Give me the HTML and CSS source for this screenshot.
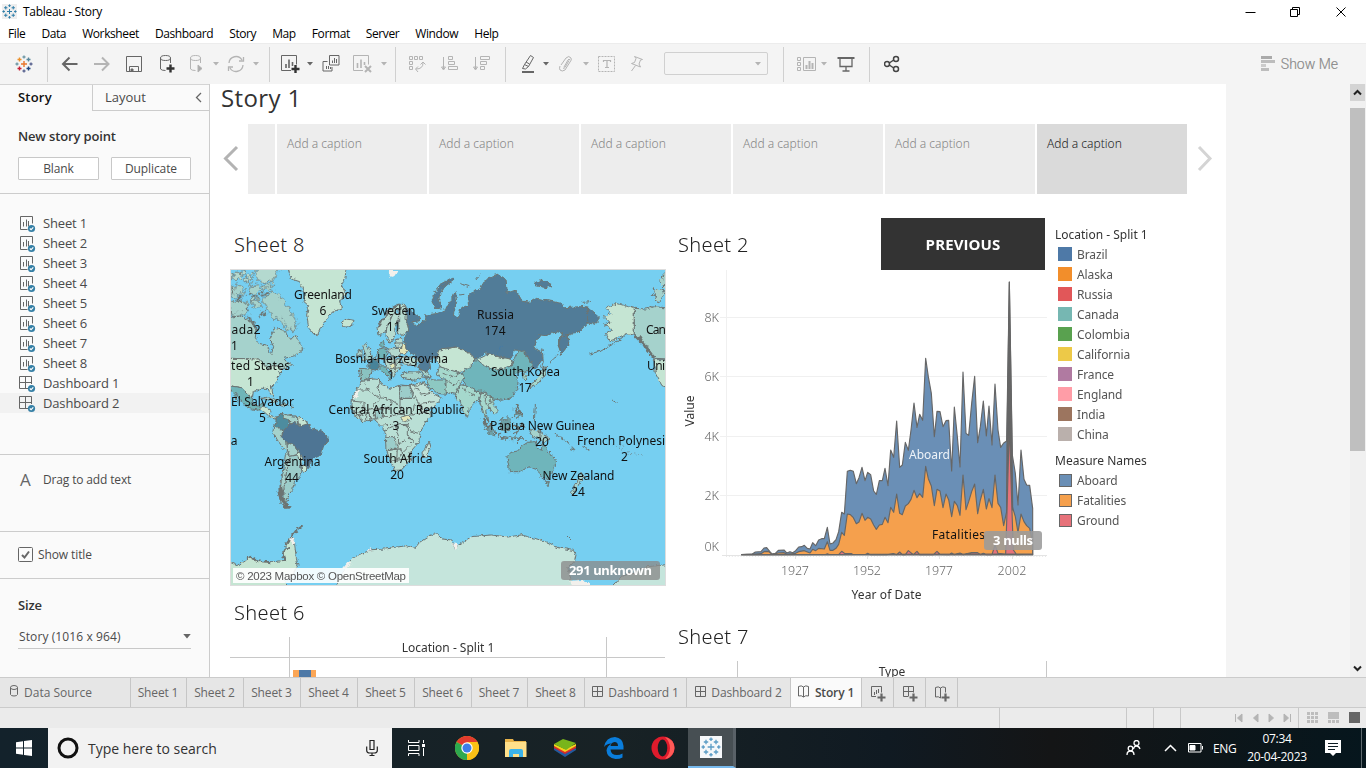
FILE: index.html
```html
<!DOCTYPE html>
<html lang="en">
<head>
<meta charset="utf-8">
<title>Tableau - Story</title>
<link rel="stylesheet" href="styles.css">
</head>
<body>
<svg class="defs" aria-hidden="true">
  <symbol id="logo" viewBox="0 0 18 18"><path d="M9 6v6M6 9h6"/><path d="M9 0.500v3M7.500 2h3M9 14.500v3M7.500 16h3M2 7.500v3M.5 9h3M16 7.500v3M14.500 9h3M4.500 2.500v4M2.500 4.500h4M13.500 2.500v4M11.500 4.500h4M4.500 11.500v4M2.500 13.500h4M13.500 11.500v4M11.500 13.500h4"/></symbol>
  <symbol id="caret" viewBox="0 0 6 4"><path d="M0 0h6L3 3.500z"/></symbol>
  <symbol id="sheet" viewBox="0 0 17 17"><path d="M8.500 13.500H1.500V.5h12v7" /><path d="M4.500 6v4.500M7.500 3.500v7M9.500 5v5.500"/><circle class="badge" cx="12.500" cy="12.500" r="3.600"/><path class="tick" d="M10.800 12.500l1.300 1.200 2.200-2.400"/></symbol>
  <symbol id="dash" viewBox="0 0 17 17"><path d="M9 12.500H.5V.5h12v7.500M6.500 .5v12M.5 6.500h12"/><circle class="badge" cx="12.500" cy="12.500" r="3.600"/><path class="tick" d="M10.800 12.500l1.300 1.200 2.200-2.400"/></symbol>
  <symbol id="grid" viewBox="0 0 12 12"><path d="M.5 .5h10v10h-10zM5.500 .5v10M.5 5.500h10"/></symbol>
  <symbol id="book" viewBox="0 0 12 13"><path d="M.5 1.500q3-1.500 5 .5v10q-2-2-5-1zM5.500 2q2-2 5-.5v9.500q-3-1-5 1"/></symbol>
</svg>

<header class="titlebar">
  <svg class="app-icon" width="15" height="15"><use href="#logo"/></svg>
  <span class="app-name">Tableau - Story</span>
  <svg class="win-controls" width="112" height="20"><path d="M5.500 10.500h10M50.500 7.500h7v7h-7zM52.500 7v-1.500h7v7H58M96.500 5.500l9 9M105.500 5.500l-9 9"/></svg>
</header>
<nav class="menubar"><span>File</span><span>Data</span><span>Worksheet</span><span>Dashboard</span><span>Story</span><span>Map</span><span>Format</span><span>Server</span><span>Window</span><span>Help</span></nav>

<div class="toolbar">
  <div class="seg seg-logo"><svg class="multi" width="18" height="18" viewBox="0 0 18 18"><path stroke="#e8762c" d="M9 6v6M6 9h6"/><path stroke="#c72037" d="M4.500 11.500v4M2.500 13.500h4"/><path stroke="#eb912c" d="M4.500 2.500v4M2.500 4.500h4"/><path stroke="#59879b" d="M13.500 2.500v4M11.500 4.500h4"/><path stroke="#1f447e" d="M13.500 11.500v4M11.500 13.500h4"/><path stroke="#7099a6" d="M9 .5v3M7.500 2h3M2 7.500v3M.5 9h3"/><path stroke="#5b6591" d="M16 7.500v3M14.500 9h3M9 14.500v3M7.500 16h3"/></svg></div>
  <div class="seg seg-file">
    <svg class="ic bold" width="18" height="16"><path d="M16.500 8H2M8.500 1.500L2 8l6.500 6.500"/></svg>
    <svg class="ic off bold" width="18" height="16"><path d="M1 8h14.500M9 1.500L15.500 8 9 14.500"/></svg>
    <svg class="ic" width="16" height="16"><path d="M.5 .5h15v15H.5zM3.500 15.500v-5h9v5"/><path d="M5 13h2v2.500H5z" fill="#666"/></svg>
    <svg class="ic" width="18" height="18"><path d="M3.500 3v11q1 1.500 5 1.500M13.500 3v5"/><ellipse cx="8.500" cy="3" rx="5" ry="2.500"/><path class="plus" d="M13.500 9.500v8M9.500 13.500h8"/></svg>
    <svg class="ic off" width="16" height="18"><path d="M2.500 3v11q1 1.500 5 1.500M12.500 3v5"/><ellipse cx="7.500" cy="3" rx="5" ry="2.500"/><path d="M10 10v7l4-3.500z" fill="#aaa"/></svg>
    <svg class="caret off" width="6" height="4"><use href="#caret"/></svg>
    <svg class="ic off" width="18" height="18"><path d="M2 8a7 7 0 0 1 13-3M16 10a7 7 0 0 1-13 3M16.500 2v4h-4.500M1.500 16v-4H6" stroke-width="1.300"/></svg>
    <svg class="caret off" width="6" height="4"><use href="#caret"/></svg>
  </div>
  <div class="seg seg-sheet">
    <svg class="ic" width="20" height="18"><path d="M11 15.500H1.500V.5h15v9"/><path d="M6 9v4M9 4.500v8.500M12.500 7v4" stroke-width="1.600"/><path class="plus" d="M15.500 10v8M11.500 14h8"/></svg>
    <svg class="caret" width="6" height="4"><use href="#caret"/></svg>
    <svg class="ic" width="18" height="18"><path d="M7.500 .5h9.500v9.500H7.500zM5.500 6.500h-4.500v9.500h9v-4"/><path d="M10.500 5.500v2.500M12.500 3v5M14.500 4v4M4.500 11v3M6.500 11v3M8.500 12v2"/></svg>
    <svg class="ic off" width="20" height="18"><path d="M11 15.500H1.500V.5h15v9"/><path d="M5.500 8v5M9 4.500v8.500M12.500 7v3" stroke-width="1.600"/><path d="M13 11l6 6M19 11l-6 6" stroke-width="2"/></svg>
    <svg class="caret off" width="6" height="4"><use href="#caret"/></svg>
  </div>
  <div class="seg seg-sort">
    <svg class="ic off" width="18" height="18"><path d="M1.500 1.500h3v3h-3zM6.500 1.500h3v3h-3zM11.500 1.500h3v3h-3zM1.500 6.500h3v3h-3zM1.500 11.500h3v3h-3zM15 8q0 6-7 6M12.500 9.500L15 7l2.500 2.500M10 11.500L7.500 14l2.500 3"/></svg>
    <svg class="ic off" width="19" height="18"><path d="M3.500 2v12M1.500 12h4l-2 3zM8.500 1.500h4v3h-4zM8.500 6.500h6v3h-6zM8.500 11.500h9v3h-9z"/></svg>
    <svg class="ic off" width="19" height="18"><path d="M3.500 2v12M1.500 12h4l-2 3zM8.500 1.500h9v3h-9zM8.500 6.500h6v3h-6zM8.500 11.500h4v3h-4z"/></svg>
  </div>
  <div class="seg seg-format">
    <svg class="ic" width="14" height="20"><path d="M9.500 1.500l3 2-5 9-4-2zM3.500 10.500l-2 4 3 .5 3-2.500M5 8l3.500 2"/><path d="M1 18h12" stroke-width="2"/></svg>
    <svg class="caret" width="6" height="4"><use href="#caret"/></svg>
    <svg class="ic off" width="16" height="18"><path d="M3 10l5-7q3-3 5 0 1 2-1 4l-5 8q-3 2-5 0-1-1.500 0-4M6 12l4-7q1-2 2 0M5 13q1 1 2-.5l4-7"/></svg>
    <svg class="caret off" width="6" height="4"><use href="#caret"/></svg>
    <svg class="ic off" width="18" height="16"><path d="M.5 .5h16v15H.5z" stroke-dasharray="2 1"/><path d="M5.500 6V4.500h7V6M9 4.500v7M7 11.500h4" stroke-width="1.200"/></svg>
    <svg class="ic off" width="16" height="18"><path d="M5.500 1.500l8 3-2 .5-1.500 4 1.500 3-9-3.500 3-1 1.500-4zM6.500 10.500l-4 5.500"/></svg>
    <span class="combo"><svg class="caret off" width="6" height="4"><use href="#caret"/></svg></span>
  </div>
  <div class="seg seg-view">
    <svg class="ic off" width="21" height="16"><path d="M1.500 1.500h3v3h-3zM1.500 6.500h3v3h-3zM1.500 11.500h3v3h-3zM7.500 1.500h12v13h-12z"/><path d="M10.500 9v4M13.500 5v8M16.500 7v6" stroke-width="2"/></svg>
    <svg class="caret off" width="6" height="4"><use href="#caret"/></svg>
    <svg class="ic" width="18" height="18"><path d="M.5 3h17" stroke-width="2"/><path d="M3 3v8.500h12V3M9 11.500v4M5.500 16h7" stroke-width="1.300"/></svg>
  </div>
  <div class="seg seg-share"><svg class="ic dark" width="16" height="18"><circle cx="3" cy="9" r="2.500"/><circle cx="12" cy="4" r="2.500"/><circle cx="12" cy="14" r="2.500"/><path d="M5.300 8L9.700 5M5.300 10L9.700 13"/></svg></div>
  <div class="showme"><svg width="15" height="16"><path d="M0 0h11v3H0z" fill="#aaa"/><path d="M0 4h14v3H0zM0 12h8v3H0z" fill="#bdbdbd"/><path d="M0 8h5v3H0z" fill="#ccc"/></svg><span>Show Me</span></div>
</div>

<main class="workspace">
  <aside class="side">
    <div class="side-tabs"><b>Story</b><div class="layout-tab"><span>Layout</span><svg width="7" height="11"><path d="M6 1L1.500 5.500 6 10"/></svg></div></div>
    <section class="new-point"><h3>New story point</h3><div class="btns"><button>Blank</button><button>Duplicate</button></div></section>
    <ul class="sheets">
      <li><svg width="17" height="17"><use href="#sheet"/></svg>Sheet 1</li>
      <li><svg width="17" height="17"><use href="#sheet"/></svg>Sheet 2</li>
      <li><svg width="17" height="17"><use href="#sheet"/></svg>Sheet 3</li>
      <li><svg width="17" height="17"><use href="#sheet"/></svg>Sheet 4</li>
      <li><svg width="17" height="17"><use href="#sheet"/></svg>Sheet 5</li>
      <li><svg width="17" height="17"><use href="#sheet"/></svg>Sheet 6</li>
      <li><svg width="17" height="17"><use href="#sheet"/></svg>Sheet 7</li>
      <li><svg width="17" height="17"><use href="#sheet"/></svg>Sheet 8</li>
      <li><svg width="17" height="17"><use href="#dash"/></svg>Dashboard 1</li>
      <li class="hover"><svg width="17" height="17"><use href="#dash"/></svg>Dashboard 2</li>
    </ul>
    <section class="add-text"><span class="big-a">A</span><span>Drag to add text</span></section>
    <section class="show-title"><svg width="15" height="15"><rect x=".5" y=".5" width="14" height="14" rx="1"/><path d="M4 8l2.500 2.500L11 4.500" stroke-width="2"/></svg><span>Show title</span></section>
    <section class="size"><h3>Size</h3><div class="select"><span>Story (1016 x 964)</span><svg class="caret" width="8" height="5"><use href="#caret"/></svg></div></section>
  </aside>

  <div class="story">
    <h1>Story 1</h1>
    <div class="captions">
      <svg class="nav" width="38" height="70"><path d="M27 23L15.500 34.500 27 46" stroke="#b3b3b3" stroke-width="3"/></svg>
      <div class="cap first"></div><div class="cap">Add a caption</div><div class="cap">Add a caption</div><div class="cap">Add a caption</div><div class="cap">Add a caption</div><div class="cap">Add a caption</div><div class="cap active">Add a caption</div>
      <svg class="nav" width="38" height="70"><path d="M12 23L23 34.500 12 46" stroke="#d4d4d4" stroke-width="3"/></svg>
    </div>
    <div class="board">
      <div class="col-left">
        <h2 class="t8">Sheet 8</h2>
        <svg class="map" width="436" height="317" viewBox="230 269 436 317">
          <rect x="230.500" y="269.500" width="435" height="316" fill="#76cff1" stroke="#ddd"/>
          <clipPath id="mc"><rect x="231" y="270" width="434" height="315"/></clipPath>
          <filter id="coast" x="-5%" y="-5%" width="110%" height="110%" color-interpolation-filters="sRGB"><feTurbulence type="fractalNoise" baseFrequency=".09" numOctaves="3" seed="4"/><feDisplacementMap in="SourceGraphic" scale="13" xChannelSelector="R" yChannelSelector="G"/></filter>
          <filter id="isles" x="-5%" y="-5%" width="110%" height="110%" color-interpolation-filters="sRGB"><feTurbulence type="fractalNoise" baseFrequency=".07" numOctaves="3" seed="9"/><feDisplacementMap in="SourceGraphic" scale="34" xChannelSelector="R" yChannelSelector="G"/></filter>
          <g clip-path="url(#mc)"><g class="land" transform="translate(228 265) scale(.33333)">
            <g filter="url(#isles)">
              <path fill="#a5d2cc" d="M110 92L130 80 155 90 165 110 190 130 190 150 206 172 200 196 178 190 160 165 135 155 108 118ZM4 110L40 100 60 115 55 145 35 150 4 148ZM68 100L90 98 96 118 85 135 70 125ZM2 65L30 60 50 72 45 92 20 98 2 90ZM60 62L90 58 100 75 85 88 62 84ZM105 60L140 62 130 72 108 72Z"/>
              <path fill="#b4d9cf" d="M20 20L45 18 40 40 22 45ZM52 30L72 22 75 45 55 50ZM85 5L158 5 140 35 128 52 98 52 84 35ZM0 20L16 25 14 42 0 44Z"/>
              <path class="heavy" d="M8 150L30 156 50 168M52 126L64 140M10 70L18 86M98 92L118 84M20 104L40 108M70 90L84 96M60 158L74 176 86 196M112 134L100 152"/>
              <g transform="translate(654 0)"><path fill="#6da0a6" d="M110 462L130 480 155 510 145 512 122 490ZM168 468L190 455 198 470 185 500 166 490ZM205 490L220 480 215 505ZM208 420L218 432 226 455 216 462 208 440ZM150 512L200 518 240 522 200 524Z"/><path class="heavy" d="M210 425L222 450M112 465L128 486M206 482L212 500M228 478L236 484"/><path fill="#a5d2cc" d="M620 80L640 72 655 85 640 110 625 100ZM640 40L664 30 664 72 645 55ZM608 134L624 128 640 132"/></g>
            </g>
            <g filter="url(#coast)">
            <path fill="#a5d2cc" d="M2 158L40 152 70 172 84 195 82 218 92 235 115 240 130 268 137 245 125 222 140 190 165 195 190 225 202 212 225 252 200 272 170 280 178 290 194 300 165 312 140 300 118 312 95 282 2 280Z"/>
            <g fill="#c5e5d3">
              <path d="M178 5L355 5 350 45 340 60 355 88 335 108 340 132 312 142 298 160 282 180 268 212 258 208 242 188 236 150 242 122 228 110 232 88 215 50 190 42Z"/>
              <path d="M340 172L355 162 378 166 374 180 356 187 342 182Z"/>
              <path d="M2 280L95 282 120 312 140 300 165 312 155 322 148 348 130 365 137 394 128 388 120 370 100 370 76 380 73 400 55 382 40 368 2 362Z"/>
            </g>
            <path fill="#6fb5b8" d="M2 362L40 368 55 382 72 398 76 420 94 424 100 412 108 415 102 428 94 436 60 430 38 408 22 382 28 410 15 385Z"/>
            <path fill="#c5e5d3" d="M92 432L108 424 126 436 124 450 140 456 152 455 148 464 128 458 110 442ZM158 414L178 418 172 426 158 422Z"/>
            <path fill="#a5d2cc" d="M98 400L118 396 150 410 138 412 120 404ZM188 424L196 424 194 428Z"/>
            <path fill="#4d8c9f" d="M145 460L162 444 168 460 184 465 180 485 174 500 160 492 142 482Z"/>
            <g fill="#a5d2cc"><path d="M162 446L180 450 210 455 208 475 190 485 184 465 168 460Z"/><path d="M137 482L150 488 166 498 160 518 176 532 180 560 165 548 148 525 135 500Z"/><path d="M178 532L200 542 214 560 205 570 185 574 178 555Z"/></g>
            <path fill="#c5e5d3" d="M208 455L240 472 236 484 212 480ZM205 568L214 560 226 578 220 590ZM222 600L240 612 230 622 220 615Z"/>
            <path fill="#4e7594" d="M172 490L185 478 200 472 215 484 240 476 248 490 280 498 300 514 300 530 285 548 280 570 258 580 248 592 240 612 224 602 234 594 224 580 214 560 202 542 178 532 160 518 166 500Z"/>
            <path fill="#9ccdca" d="M185 574L205 570 220 590 216 602 222 618 212 640 200 648 194 674 182 690 176 712 168 710 168 670 174 630Z"/>
            <path fill="#a5d2cc" d="M176 558L184 574 174 630 166 680 162 700 180 722 190 726 176 730 158 712 152 688 160 650 168 610 172 570Z"/>
            <path class="heavy" d="M155 670L158 700 172 722 186 728M158 660L164 690M152 680L162 706 180 726M160 690L172 712"/>

            <g fill="#b7dcd0"><path d="M447 188L470 158 482 135 510 118 532 118 534 126 514 130 496 145 484 170 474 190 470 205 450 210Z"/><path d="M496 145L512 148 510 170 500 192 502 212 486 235 474 215 476 190Z"/><path d="M514 130L530 126 540 160 546 195 520 212 508 205 512 188 512 150Z"/></g>
            <path class="mid" d="M448 188L470 156 484 134 512 118"/>
            <path fill="#a5d2cc" d="M400 282L412 266 404 245 414 235 422 248 432 268 430 282 412 287ZM388 258L402 255 402 272 386 276Z"/>
            <path fill="#6fb5b8" d="M452 252L474 248 480 266 470 285 450 280ZM452 304L470 302 478 318 494 336 486 346 478 330 460 318ZM458 236L466 226 470 244 460 248Z"/>
            <path fill="#478399" d="M422 290L440 282 454 288 453 308 442 316 424 312Z"/>
            <path fill="#8ac3c1" d="M395 310L424 312 432 320 420 342 400 346 392 338Z"/>
            <path fill="#b4d9cf" d="M480 252L514 250 516 272 492 276ZM470 286L492 278 516 282 520 304 508 318 500 334 488 320 474 304ZM516 276L552 276 576 288 560 302 530 300ZM500 225L520 220 526 244 504 248Z"/>
            <path fill="none" d="M478 292L516 296M488 280L494 300 486 312M504 282L500 322M500 310L516 308M440 280L446 272 452 278M502 234L524 234M400 314L400 342"/>
            <path fill="#e3e6b8" d="M514 250L530 238 542 255 536 266 516 266ZM484 300L498 296 502 308 490 312Z"/>
            <path fill="#a5d2cc" d="M518 328L540 320 580 322 586 338 560 346 522 340ZM576 312L600 322 610 336 590 332Z"/>
            <path fill="#b9dfd5" d="M400 346L440 342 456 344 460 358 490 370 515 360 545 362 556 385 578 425 582 442 610 436 602 460 578 495 572 532 552 555 546 588 520 615 500 616 488 588 476 558 476 520 470 498 460 482 440 464 400 470 384 452 368 430 370 405 386 375Z"/>
            <path class="snow" d="M386 376L396 378 384 400 374 402Z"/>
            <path fill="#c2e2d8" d="M545 362L588 350 602 372 620 388 642 400 622 422 580 440 565 400Z"/>
            <path fill="#8dc8c2" d="M590 332L612 345 650 345 656 388 628 385 604 366Z"/>
            <path fill="#9ccdca" d="M472 515L500 515 508 552 474 554ZM440 435L465 432 462 460 444 462ZM514 362L545 362 556 400 516 400Z"/>
            <path fill="#e3e6b8" d="M515 458L540 450 552 462 530 470Z"/>
            <path fill="none" d="M386 375L420 375 455 400 430 432M410 352L420 375M456 344L450 368 458 398 490 405 516 422 516 360M516 400L556 400M490 405L486 430 440 430M370 408L408 412 408 435 390 440M408 435L440 430 442 464M516 422L512 448 486 455 462 455M512 448L554 450 560 410M554 450L600 440M400 470L405 450 420 440 430 468M470 498L500 480 538 478 552 500 572 505M500 480L512 515 510 552 528 560 556 530 538 510 538 478M476 558L508 552 506 586 528 560M506 586L540 580 548 558M488 588L506 586M520 430L530 450M548 362L560 360 580 390 610 385M588 350L560 370M582 440L575 415 620 410M385 452L410 448M590 300L622 280 636 292 654 290M416 452L416 468M424 446L426 468M466 480L490 478M374 440L394 446 396 462M538 520L550 522M512 535L534 528"/>
            <path fill="#c2e2d8" d="M582 562L594 550 602 532 606 548 594 576 584 578Z"/>
            <path fill="#c5e5d3" d="M2 890L30 902 52 884 64 872 90 890 140 890 170 886 165 862 182 850 170 842 188 820 198 820 205 880 210 900 190 938 170 945 175 970 2 970Z"/>
            <path class="mid" d="M50 888L64 874 88 888 130 892M168 886L164 862 182 848M172 842L188 818 204 796 224 782M190 808L210 800"/>
            <path fill="#c5e5dc" d="M320 970L345 922 370 882 395 868 432 854 470 852 535 842 560 850 575 832 605 812 625 806 642 822 672 825 680 848 700 835 730 815 790 810 840 816 880 810 920 820 960 832 990 848 1036 856 1044 870 1040 888 1020 910 1030 948 1060 970Z"/>
            <path fill="#c5e5dc" d="M1150 970L1180 935 1230 918 1260 905 1324 898 1324 970Z"/>
            <path class="snow" d="M186 820L198 818 204 832 196 840ZM345 910L365 885 370 895 350 915ZM412 858L425 850 432 856ZM672 835L690 838 684 855ZM480 15L510 15 500 32 488 36ZM1024 948L1060 945 1080 952 1090 965 1030 965Z"/>

            <g transform="translate(654 0)">
              <path fill="#517c98" d="M-119 128L-98 142 -78 156 -80 168 -102 170 -88 184 -62 166 -60 150 -30 146 0 132 16 104 28 80 32 110 22 150 36 160 44 130 68 120 64 95 88 74 100 74 120 42 142 38 150 25 180 45 184 84 210 75 228 108 252 112 272 100 345 115 355 128 420 124 460 158 448 178 425 174 395 205 368 208 368 240 346 266 336 240 350 204 332 200 300 212 282 210 262 248 285 260 290 282 268 312 252 302 256 290 236 258 205 255 195 282 150 275 120 264 90 282 70 265 30 246 -20 252 -22 272 -50 285 -46 310 -60 320 -85 308 -76 290 -105 262 -120 250 -125 220 -112 195 -120 160Z"/>
              <path fill="#517c98" d="M-30 132L-42 110 -32 80 -12 55 18 38 24 45 0 62 -18 85 -22 108 -12 128ZM264 52L290 46 320 60 300 68 270 62ZM338 240L345 215 366 208 368 238 346 266Z"/>
              <path class="lake" d="M168 242Q166 258 150 268"/>
              <g fill="#c5e5d3"><path d="M-22 255L30 246 70 265 90 282 76 296 75 312 40 322 10 316 -16 306 -30 285Z"/><path d="M94 284L130 266 160 276 200 284 196 304 150 316 112 300Z"/><path d="M475 155L495 145 480 130 512 115 565 130 565 210 540 206 510 222 490 228 478 208 500 195 475 180 492 172Z"/><path d="M625 284L674 284 674 370 648 362 628 325Z"/></g>
              <g fill="#6fb5bb"><path d="M45 335L56 310 76 308 90 284 112 302 150 316 196 304 210 272 220 256 240 268 262 300 240 322 226 318 205 328 216 348 214 372 196 398 170 406 140 402 118 382 90 378 60 360Z"/><path d="M183 575L195 562 215 558 225 545 245 532 268 530 272 545 286 556 290 530 302 552 328 585 328 605 305 642 288 640 275 615 250 605 222 620 190 620 188 600Z"/><path d="M298 650L310 650 306 662Z"/></g>
              <g fill="#a5d8cd"><path d="M30 388L40 358 60 362 90 380 108 378 98 402 86 412 70 430 64 460 52 440 44 412 28 402Z"/><path d="M106 380L122 386 142 402 140 420 158 438 144 450 132 430 118 432 126 470 112 440 100 408Z"/><path d="M-20 305L45 325 54 338 40 360 30 388 0 382 0 345 -26 330ZM255 358L270 346 284 330 290 308 302 306 292 336 272 360 252 368ZM228 322L240 330 242 345 232 342Z"/></g>
              <path fill="none" d="M118 384L118 410 132 430M130 396L136 412 128 416M106 380L100 396M48 372L88 392"/>
              <path fill="#a5d2cc" d="M250 492L285 500 312 522 296 530 262 515ZM405 622L416 636 402 652 380 690 376 680 396 648Z"/>
              <path fill="none" d="M-10 325L20 335 45 325M0 345L25 360 40 345M425 124L425 175M540 210L500 238 465 258 430 267M325 506L370 535M375 540L385 560M498 405L515 415M288 248L292 290 285 310M303 300L330 275 346 266M215 370L216 380M410 545L430 555M370 550L385 555M10 48L-12 65M55 88L40 90M40 55L70 65M105 25L90 45M410 112L435 110M268 420L265 470M360 810L375 825M282 492L282 520"/>
              <path class="dots" d="M510 545L550 565 590 570M500 540L540 545M410 545L430 555"/>
              <path fill="#a5d2cc" d="M565 130L600 132 625 125 674 130 674 282 625 280 610 255 592 230 565 208Z"/>
              <path class="heavy" d="M580 215L600 250 625 278M565 210L595 240"/>
            </g>
          </g></g>
          <g class="labels">
            <text x="323" y="299" textLength="58">Greenland</text><text x="323" y="315">6</text>
            <text x="393.500" y="315" textLength="44">Sweden</text><text x="393.500" y="331">11</text>
            <text x="495.500" y="319" textLength="37">Russia</text><text x="495" y="335" textLength="21">174</text>
            <text x="246" y="334" textLength="29">ada2</text><text x="234.500" y="350">1</text>
            <text x="260.500" y="370" textLength="59">ted States</text><text x="250.500" y="386">1</text>
            <text x="391.500" y="363" textLength="113">Bosnia-Herzegovina</text><text x="391" y="379">1</text>
            <text x="525.500" y="376" textLength="69">South Korea</text><text x="525" y="392" textLength="13">17</text>
            <text x="262.500" y="406" textLength="63">El Salvador</text><text x="262.500" y="422">5</text>
            <text x="396.500" y="414" textLength="136">Central African Republic</text><text x="396" y="430">3</text>
            <text x="542.500" y="430" textLength="105">Papua New Guinea</text><text x="542" y="446">20</text>
            <text x="234" y="445">a</text>
            <text x="292.500" y="466" textLength="56">Argentina</text><text x="292" y="482">44</text>
            <text x="398" y="463" textLength="69">South Africa</text><text x="397" y="479">20</text>
            <text x="621" y="445" textLength="88">French Polynesi</text><text x="624.500" y="461">2</text>
            <text x="578.500" y="480" textLength="72">New Zealand</text><text x="578" y="496">24</text>
            <text x="656" y="334" textLength="20">Can</text><text x="656" y="370" textLength="18">Uni</text>
          </g></g>
          <rect x="233" y="568" width="176" height="15" fill="#fff" opacity=".9"/>
          <text class="attr" x="236" y="580" textLength="170">© 2023 Mapbox © OpenStreetMap</text>
          <rect x="561" y="561" width="99" height="19" rx="3" fill="#8b8b8b" opacity=".78"/>
          <text class="pill" x="610.500" y="575" textLength="83">291 unknown</text>
        </svg>
        <h2 class="t6">Sheet 6</h2>
        <div class="table6"><div class="th"><i></i><span>Location - Split 1</span><i></i></div><div class="tr"><i></i><div class="cell"><b></b></div><i></i></div></div>
      </div>
      <div class="col-mid">
        <div class="mid-head"><h2>Sheet 2</h2><button class="prev">PREVIOUS</button></div>
        <svg class="chart" width="375" height="340" viewBox="678 270 375 340">
          <path stroke="#f0f0f0" d="M726.500 270V555M720 317.500h327M720 376.500h327M720 436.500h327M720 495.500h327"/>
          <path stroke="#e4e4e4" d="M722 555.500H1047M795.500 555v4M867.500 555v4M939.500 555v4M1012.500 555v4"/>
          <path stroke="#e8e8e8" stroke-dasharray="1 1.900" d="M726 556.500H1047"/>
          <g class="area" transform="translate(670 210) scale(.33333)">
            <path fill="#6a8fb6" d="M215 1034L247 1032 256 1026 273 1025 282 1014 290 1013 299 1024 306 1032 316 1030 325 1021 342 1020 350 1029 360 1025 368 1028 377 1022 386 1011 395 1010 403 1006 412 1015 420 1017 428 998 437 1007 446 990 455 986 463 986 472 952 480 1002 489 999 498 989 506 965 515 907 523 912 532 784 541 781 550 784 559 821 567 803 576 772 585 812 593 787 602 794 611 843 619 853 628 812 637 812 645 775 654 827 662 720 671 742 680 633 689 772 697 765 706 697 715 721 723 660 732 579 741 652 749 613 758 631 767 445 775 500 784 550 793 680 801 604 810 605 819 650 828 632 836 631 845 783 853 591 862 680 870 771 879 486 888 670 896 676 905 580 914 499 923 698 931 650 940 573 949 678 957 588 966 705 975 522 984 660 992 712 1001 699 1010 693 1018 216 1027 735 1036 790 1044 885 1053 720 1062 808 1070 825 1079 826 1088 895 1088 1034Z"/>
            <path fill="#f5a04d" d="M215 1034L256 1032 273 1031 282 1025 295 1024 306 1033 325 1029 342 1028 350 1033 377 1030 386 1025 403 1022 420 1029 428 1018 437 1022 446 1015 463 1017 472 995 480 1021 489 1021 498 1015 506 1003 515 967 523 976 532 912 541 914 550 923 559 941 567 936 576 910 585 931 593 922 602 927 611 945 619 958 628 945 637 943 645 922 654 938 662 892 671 907 680 852 689 910 697 914 706 888 715 881 723 868 732 841 741 863 749 851 758 862 767 769 775 806 784 828 793 887 801 838 810 843 819 893 828 852 836 869 845 920 853 874 862 887 870 916 879 795 888 899 896 875 905 845 914 822 923 911 931 870 940 838 949 897 957 866 966 893 975 795 984 880 992 892 1001 947 1010 905 1018 460 1027 890 1036 920 1044 967 1053 912 1062 935 1070 947 1079 955 1088 1000 1088 1034Z"/>
            <path fill="#666" d="M1010 900L1011 690 1018 216 1026 700 1028 900Z"/>
            <path fill="#e7727a" d="M215 1034L465 1034 472 1031 480 1034 506 1034 515 1024 525 1031 545 1031 550 1034 585 1034 593 1030 602 1034 650 1034 670 1031 680 1034 689 1026 697 1034 706 1034 715 1022 730 1034 741 1024 749 1034 790 1034 801 1024 810 1033 838 1034 845 1029 853 1034 870 1029 880 1034 905 1028 923 1028 931 1034 940 1030 949 1034 966 1034 975 1005 984 1030 1007 1032 1011 905 1018 640 1026 905 1030 1020 1040 1034 1088 1032Z"/>
          </g>
          <g class="ax"><text x="719" y="322" text-anchor="end">8K</text><text x="719" y="381" text-anchor="end">6K</text><text x="719" y="441" text-anchor="end">4K</text><text x="719" y="500" text-anchor="end">2K</text><text x="719" y="551" text-anchor="end">0K</text>
          <text x="795" y="575" text-anchor="middle" textLength="28">1927</text><text x="867" y="575" text-anchor="middle" textLength="28">1952</text><text x="939" y="575" text-anchor="middle" textLength="28">1977</text><text x="1012" y="575" text-anchor="middle" textLength="29">2002</text></g>
          <g class="axt"><text x="886.500" y="599" text-anchor="middle" textLength="70">Year of Date</text><text transform="translate(694 411) rotate(-90)" text-anchor="middle" textLength="31">Value</text></g>
          <text class="mark" x="909" y="459" fill="#eef3f8" textLength="41">Aboard</text>
          <text class="mark" x="932" y="539" fill="#111" textLength="53">Fatalities</text>
          <rect x="984" y="531" width="58" height="19" rx="3" fill="#9b9b9b" opacity=".88"/>
          <text class="pill" x="1013" y="545" textLength="40">3 nulls</text>
        </svg>
        <h2 class="t7">Sheet 7</h2>
        <div class="table7"><span>Type</span></div>
      </div>
      <div class="legend">
        <h4>Location - Split 1</h4>
        <ul><li><i class="c1"></i>Brazil</li><li><i class="c2"></i>Alaska</li><li><i class="c3"></i>Russia</li><li><i class="c4"></i>Canada</li><li><i class="c5"></i>Colombia</li><li><i class="c6"></i>California</li><li><i class="c7"></i>France</li><li><i class="c8"></i>England</li><li><i class="c9"></i>India</li><li><i class="c10"></i>China</li></ul>
        <h4 class="mn">Measure Names</h4>
        <ul class="lined"><li><i class="m1"></i>Aboard</li><li><i class="m2"></i>Fatalities</li><li><i class="m3"></i>Ground</li></ul>
      </div>
    </div>
  </div>
  <div class="scroll"><div class="up"><svg width="9" height="7"><path d="M1 5.500L4.500 2 8 5.500"/></svg></div><div class="thumb"></div><div class="down"><svg width="9" height="7"><path d="M1 1.500L4.500 5 8 1.500"/></svg></div></div>
</main>

<nav class="tabs">
  <div class="ds"><svg width="9" height="13"><ellipse cx="4" cy="2.500" rx="3.500" ry="2"/><path d="M.5 2.500v7q.5 1.500 3.500 1.500t3.500-1.500v-7"/></svg>Data Source</div>
  <div class="tb w56">Sheet 1</div><div class="tb">Sheet 2</div><div class="tb">Sheet 3</div><div class="tb">Sheet 4</div><div class="tb">Sheet 5</div><div class="tb">Sheet 6</div><div class="tb w56">Sheet 7</div><div class="tb">Sheet 8</div>
  <div class="d1"><svg width="12" height="12"><use href="#grid"/></svg>Dashboard 1</div><div class="d2"><svg width="12" height="12"><use href="#grid"/></svg>Dashboard 2</div>
  <div class="st"><svg width="12" height="13"><use href="#book"/></svg>Story 1</div>
  <div class="nw"><svg width="16" height="16"><path d="M6 10.500H1.500V.5h10v6M4.500 6v3M6.500 4v4M8.500 3v4"/><path class="pl" d="M11.500 7.500v8M7.500 11.500h8"/></svg></div>
  <div class="nw"><svg width="16" height="16"><path d="M6 10.500H1.500V.5h10v6M6.500 .5v10M1.500 5.500h10"/><path class="pl" d="M11.500 7.500v8M7.500 11.500h8"/></svg></div>
  <div class="nw"><svg width="16" height="16"><path d="M6.500 12V2q-2-2-5-.5v9.500q3-1 5 1M6.500 2q2-2 5-.5v5"/><path class="pl" d="M11.500 7.500v8M7.500 11.500h8"/></svg></div>
</nav>
<div class="status"><i class="s1"></i><i class="s2"></i><i class="s3"></i><div class="s4"><svg width="57" height="10"><path d="M.5 1v8M7 1v8L2.500 5zM23 1v8l-4.500-4zM34 1v8l4.500-4zM49 1v8l4.500-4zM55.500 1v8" /></svg></div><div class="s5"><svg width="56" height="12" shape-rendering="crispEdges"><path fill="#bdbdbd" d="M0 0h3v3H0zM4 0h3v3H4zM8 0h3v3H8zM0 4h3v3H0zM4 4h3v3H4zM8 4h3v3H8zM0 8h3v3H0zM4 8h3v3H4zM8 8h3v3H8zM21 0h11v7H21zM21 8h3v3h-3zM25 8h3v3h-3zM29 8h3v3h-3z"/><path fill="#666" d="M42 0h11v11H42z"/></svg></div></div>

<footer class="taskbar">
  <div class="start"><svg width="16" height="16"><path fill="#fff" d="M0 2.200L7 1.200V7.500H0zM8 1L16 0v7.500H8zM0 8.500h7v6.200L0 13.800zM8 8.500h8V16l-8-1.100z"/></svg></div>
  <div class="search"><svg width="22" height="22"><circle cx="11" cy="11" r="9" fill="none" stroke="#111" stroke-width="3"/></svg><span>Type here to search</span><svg width="12" height="18"><path fill="none" stroke="#222" stroke-width="1.200" d="M4 1.500h4v9H4zM.7 7.500v4q0 2.500 3 2.500h4.600q3 0 3-2.500v-4M6 14v2.500M3.500 16.500h5"/></svg></div>
  <div class="app first-app"><svg width="18" height="16"><path fill="none" stroke="#fff" d="M.5 0v2.500h10.500V0M.5 5.500h10.500v5H.5zM.5 16v-2.500h10.500V16M15.500 0v3M15.500 8v8"/><path fill="#fff" d="M14 4h3v3h-3z"/></svg></div>
  <div class="app chrome"><svg width="24" height="24" viewBox="0 0 24 24"><circle cx="12" cy="12" r="12" fill="#fbc116"/><path fill="#e33b2e" d="M12 12L1.600 6A12 12 0 0 1 22.400 6z"/><path fill="#2da94f" d="M12 12L1.600 6A12 12 0 0 0 12 24z"/><path fill="#fbc116" d="M17 14L12 24A12 12 0 0 0 22.400 6H12z"/><circle cx="12" cy="12" r="5.700" fill="#fff"/><circle cx="12" cy="12" r="4.500" fill="#3d7ee8"/></svg></div>
  <div class="app"><svg width="22" height="20"><path fill="#e9b44a" d="M0 1h8l1 2h12v4H0z"/><path fill="#ffe08a" d="M0 4h21.500v15H0z"/><path fill="#3bb3ea" d="M4 19v-6q0-2 2-2h10q2 0 2 2v6h-4v-3H8v3z"/></svg></div>
  <div class="app"><svg width="22" height="20"><path fill="#235a9e" d="M0 12l11 7 11-7v-2L11 15 0 9z"/><path fill="#d82b2b" d="M0 10l11 6 11-6V8L11 13 0 8z"/><path fill="#f7d21b" d="M0 8l11 6 11-6V6L11 11 0 6z"/><path fill="#78b51b" d="M0 6L9 1l13 4-10 7z"/></svg></div>
  <div class="app"><svg width="22" height="22"><path fill="#0a7ddb" d="M1 10Q3 0 12 0q8 1 8.500 9v3.500H7.500Q8 18 14 18q3 0 5.500-1.500v4Q17 22 12.500 22 4 21 3.500 13.500 4 9 8.500 6.500 3.500 6.500 1 10zM7.500 9h7.500q0-4-3.500-4-3.500.5-4 4z"/></svg></div>
  <div class="app"><svg width="24" height="24"><ellipse cx="12" cy="12" rx="11.500" ry="11.500" fill="#df1b2c"/><path fill="#ff5a57" d="M14 1q9 2 9.500 11Q23 21 14 23q5-5 5-11T14 1z"/><ellipse cx="11.500" cy="12" rx="4.800" ry="8.500" fill="#152024"/></svg></div>
  <div class="app tableau"><svg width="22" height="22"><rect width="22" height="22" fill="#f6f8fa"/><svg class="tlogo" x="1" y="1" width="20" height="20"><use href="#logo"/></svg></svg></div>
  <div class="tray">
    <svg class="people" width="15" height="16"><path d="M1 15q0-4 3.500-4T8 15M7.500 9q.5-3 3-3t3.500 3"/><circle cx="4.500" cy="8.500" r="2.300"/><circle cx="10.500" cy="3" r="2.500"/></svg>
    <svg class="chev" width="13" height="8"><path d="M1 7l5.500-5.500L12 7"/></svg>
    <svg class="batt" width="15" height="10"><path d="M.5 .5h12.500v8.500H.5zM14.500 3v3.500"/><path fill="#fff" d="M2 2.500h5v4.500H2z"/></svg>
    <span class="eng">ENG</span>
    <div class="clock"><div>07:34</div><div>20-04-2023</div></div>
    <svg class="note" width="16" height="16"><path fill="#fff" stroke="none" d="M0 0h16v13h-5l-3 3-3-3H0z"/><path stroke="#0e1d24" d="M3 3.500h10M3 6.500h10M3 9.500h7"/></svg>
  </div>
</footer>
</body>
</html>
```
FILE: styles.css
```css
*{box-sizing:border-box}
body{margin:0;width:1366px;height:768px;overflow:hidden;background:#fff;font-family:"Open Sans","Noto Sans",sans-serif;font-size:13px;color:#333;display:flex;flex-direction:column}
h1,h2,h3,h4,ul{margin:0;padding:0;list-style:none;font-weight:400}
svg{display:block;flex:none;fill:none}
.defs{width:0;height:0;position:absolute}
button{font:inherit;border:0;padding:0}

.titlebar{height:23px;display:flex;align-items:center;padding-left:2px;font-size:12px;color:#000}
.app-icon{stroke:#2f7ea8;stroke-width:1.200;background:#eee}
.app-name{margin-left:6px;letter-spacing:-.3px}
.win-controls{margin-left:auto;margin-right:14px;stroke:#000}
.menubar{height:20px;display:flex;align-items:center;padding-left:8px;font-size:12px;color:#000;gap:16px;letter-spacing:-.4px}

.toolbar{height:41px;background:#f4f4f4;border-top:1px solid #ececec;display:flex;padding-top:3px;color:#666}
.seg{height:35px;padding-bottom:2px;border-right:1px solid #d0d0d0;display:grid;align-items:center;justify-items:center;justify-content:start}
.seg-logo{width:48px;grid-template-columns:47px}
.multi{stroke-width:1.400}
.seg-file{width:222px;padding-left:6px;grid-template-columns:32px 32px 32px 32px 28px 12px 28px 12px}
.seg-sheet{width:126px;padding-left:6px;grid-template-columns:28px 12px 30px 32px 12px}
.seg-sort{width:110px;padding-left:5px;grid-template-columns:32px 33px 31px}
.seg-format{width:278px;padding-left:8px;grid-template-columns:27px 10px 29px 12px 30px 42px 104px}
.seg-view{width:86px;padding-left:9px;grid-template-columns:26px 10px 34px}
.seg-share{border:0;padding-left:6px;grid-template-columns:32px}
.ic{stroke:#666}
.ic.off{stroke:#b4b4b4}
.ic.dark{stroke:#444;stroke-width:1.500}
.ic.bold{stroke-width:2}
.ic .plus{stroke:#333;stroke-width:2.400}
.caret{fill:#666}
.caret.off{fill:#b4b4b4}
.seg-format>.ic:nth-child(6){justify-self:start;margin-left:7px}
.combo{width:104px;height:23px;border:1px solid #d0d0d0;border-radius:2px;display:flex;align-items:center;justify-content:flex-end;padding-right:6px}
.showme{margin-left:auto;margin-right:28px;height:33px;display:flex;align-items:center;gap:5px;font-family:Roboto,sans-serif;font-size:14px;color:#8a8a8a;font-weight:300;-webkit-text-stroke:.2px #8a8a8a}

.workspace{height:593px;display:flex;background:#f4f4f4}
.side{width:210px;border-right:1px solid #ccc;background:#fafafa;color:#4a4a4a}
.side h3{font-weight:600;font-size:13px;color:#333;letter-spacing:-.15px}
.side-tabs{height:26px;display:flex;border-top:1px solid #d4d4d4}
.side-tabs b{width:92px;padding-left:18px;font-weight:600;line-height:25px;color:#111;letter-spacing:.2px}
.layout-tab{flex:1;border-left:1px solid #ccc;border-bottom:1px solid #ccc;height:26px;display:flex;justify-content:space-between;align-items:center;padding:0 7px 1px 12px}
.layout-tab svg{stroke:#666;stroke-width:1.300}
.new-point{height:84px;padding:17px 18px 0;border-bottom:1px solid #ccc}
.new-point h3{line-height:18px}
.btns{display:flex;gap:12px;margin-top:12px}
.btns button{width:81px;height:23px;background:#fff;border:1px solid #c8c8c8;border-radius:1px;font-size:12px;color:#4a4a4a;letter-spacing:-.1px;padding-bottom:1px}
.btns button+button{width:80px}
.sheets{height:261px;padding-top:19px;border-bottom:1px solid #ccc}
.sheets li{height:20px;display:flex;align-items:center;padding:0 0 1px 19px;gap:7px;letter-spacing:-.15px}
.sheets svg{stroke:#666;margin-top:4px}
.hover{background:#f2f2f2}
.badge{fill:#357fa5;stroke:none}
.tick{stroke:#fff;stroke-width:1.100}
.add-text{height:77px;border-bottom:1px solid #ccc;display:flex;padding:15px 0 0 20px;line-height:20px;font-size:12px;letter-spacing:-.15px}
.big-a{font-size:17px;width:23px;color:#666;font-weight:500}
.show-title{height:47px;border-bottom:1px solid #ccc;display:flex;align-items:center;padding:0 0 2px 18px;gap:5px;font-size:12px;letter-spacing:-.1px}
.show-title svg{stroke:#666}
.size{padding:17px 18px 0}
.select{display:flex;justify-content:space-between;align-items:center;border-bottom:1px solid #c8c8c8;height:24px;margin-top:11px;font-size:12px;padding-left:1px;letter-spacing:.1px}

.story{width:1016px;height:593px;background:#fff;overflow:hidden;font-family:"Noto Sans",sans-serif}
.story h1{height:40px;line-height:27px;font-size:24px;font-family:"Open Sans",sans-serif;padding-left:11px;color:#333;letter-spacing:.4px}
.captions{display:flex;height:70px}
.cap{width:150px;margin-right:2px;background:#ededed;color:#858585;font-size:12px;padding:11px 10px;line-height:17px;font-weight:300}
.cap.first{width:27px}
.cap.active{background:#dadada;color:#222;margin-right:0}
.board{display:grid;grid-template-columns:436px 12px 367px 10px 180px;padding-left:20px}
.col-left{grid-column:1}
.col-mid{grid-column:3;padding-top:24px}
.legend{grid-column:5;padding-top:31px;font-size:12px;color:#555}
h2{font-size:20px;font-weight:300;line-height:28px;color:#222;font-family:"Noto Sans",sans-serif;letter-spacing:.35px}
.t8{padding:37px 0 10px 4px}
.t6{padding-left:4px;margin-top:13px}
.land path{stroke:#6c7472;stroke-width:3}
.land .heavy{stroke-width:8;fill:none}
.land .mid{stroke-width:5;fill:none}
.land .snow{fill:#f2f0ec;stroke:none}
.land .lake{stroke:#457aa5;fill:none}
.land .dots{stroke-width:2;stroke-dasharray:3 7;fill:none}
.labels{fill:#111;font-size:12px;text-anchor:middle}
.attr{font-family:"Liberation Sans",sans-serif;font-size:11.500px;fill:#555}
.pill{font-size:13px;font-weight:700;fill:#fff;text-anchor:middle}
.table6{margin-top:10px;font-size:12px}
.th,.tr{display:grid;grid-template-columns:60px 317px 58px}
.th{height:21px;border-bottom:1px solid #c8c8c8;width:435px}
.th span,.cell{text-align:center;line-height:21px;border:solid #c8c8c8;border-width:0 1px;margin-left:-1px;width:318px}
.tr{height:20px;width:435px}
.cell{padding:12px 3px 0}
.cell b{display:block;width:23px;height:10px;background:#4e79a7;border:solid #fba656;border-width:0 5px 0 6px}
.mid-head{height:52px;display:flex;justify-content:space-between}
.mid-head h2{line-height:54px}
.prev{width:164px;height:52px;background:#333;color:#fff;font-family:"Open Sans",sans-serif;font-weight:700;font-size:15px;letter-spacing:.1px}
.area path{stroke:#666;stroke-width:3.400;stroke-linejoin:round}
.ax{font-size:12.500px;fill:#666;font-weight:300}
.axt{font-size:12px;fill:#333}
.mark{font-size:12px}
.t7{margin-top:13px}
.table7{margin:10px 0 0 59px;width:310px;height:25px;border:solid #c8c8c8;border-width:0 1px;text-align:center;font-size:12px;line-height:22px}
.legend h4{font-size:12px;line-height:20px;height:20px;color:#333}
.legend li{height:20px;display:flex;align-items:center;gap:5px;padding:0 0 2px 3px;letter-spacing:-.1px}
.legend li i{width:14px;height:14px}
.legend .mn{margin-top:6px}
.legend .lined i{width:13px;height:13px;border:1px solid #666;margin-left:1px}
.c1{background:#4e79a7}.c2{background:#f28e2b}.c3{background:#e15759}.c4{background:#76b7b2}.c5{background:#59a14f}
.c6{background:#edc948}.c7{background:#b07aa1}.c8{background:#ff9da7}.c9{background:#9c755f}.c10{background:#bab0ac}
.m1{background:#6a8fb6}.m2{background:#f5a04d}.m3{background:#e7727a}

.scroll{margin-left:auto;width:16px;background:#f0f0f0;display:flex;flex-direction:column;padding-right:1px}
.scroll svg{stroke:#222;stroke-width:2}
.up{height:17px;background:#d4d4d4;display:grid;place-items:center}
.thumb{height:343px;margin-top:7px;background:#bfbfbf}
.down{margin-top:auto;height:17px;display:grid;place-items:center}

.tabs{height:31px;background:#e6e6e6;border:solid #cbcbcb;border-width:1px 0;display:flex;font-size:12px;color:#666;letter-spacing:-.15px}
.tabs>div{border-right:1px solid #c6c6c6;height:29px;display:flex;align-items:center;justify-content:center}
.tabs svg{stroke:#666;margin-top:-2px}
.tabs .ds{width:131px;justify-content:flex-start;padding-left:10px;gap:5px;letter-spacing:0}
.tb{width:57px;padding-right:1px}
.tabs .w56{width:56px}
.d1{width:102px;gap:4px}
.d2{width:104px;gap:4px}
.tabs .st{width:71px;background:#fafafa;color:#4a4a4a;font-weight:600;gap:5px;padding-bottom:1px}
.nw{width:32px}
.tabs .nw svg{margin-top:3px}
.pl{stroke-width:2.200}
.status{height:20px;background:#ebebeb;display:flex;padding-left:999px}
.status i,.s4,.s5{border-left:1px solid #c8c8c8;height:20px;display:flex;align-items:center}
.s1{width:127px}.s2{width:27px}.s3{width:27px}
.s4{width:118px;padding-left:54px}
.s4 svg{fill:#b4b4b4;stroke:#b4b4b4}
.s5{padding-left:8px}

.taskbar{height:40px;background:linear-gradient(90deg,#13222b,#182225 45%,#101a22 65%,#141516 77%,#06161d);display:flex;color:#fff}
.start,.app{width:48px;display:grid;place-items:center}
.app{width:49.200px}
.first-app{width:50px;padding-right:1px}
.search{width:344px;background:#f2f2f2;display:flex;align-items:center;padding:0 14px 0 9px;color:#333;font-size:14px}
.search span{margin-left:9px;flex:1}
.tableau{width:48px;background:#474f53;border-bottom:2px solid #76b9ed;border-right:3px solid #596167;padding-left:2px}
.tlogo{stroke:#5b9cc5;stroke-width:1.200}
.tray{margin-left:auto;display:flex;align-items:center;font-size:12px;border-right:1px solid #5d686d;margin-right:4px;padding-right:20px}
.tray svg{stroke:#fff}
.people{stroke-width:1.300}
.chev{margin-left:23px;stroke-width:1.500}
.batt{margin-left:11px}
.eng{margin-left:10px;width:24px;letter-spacing:-.4px}
.clock{margin-left:9px;width:62px;text-align:center;line-height:18px;letter-spacing:-.3px;white-space:nowrap}
.note{margin-left:17px}
```
